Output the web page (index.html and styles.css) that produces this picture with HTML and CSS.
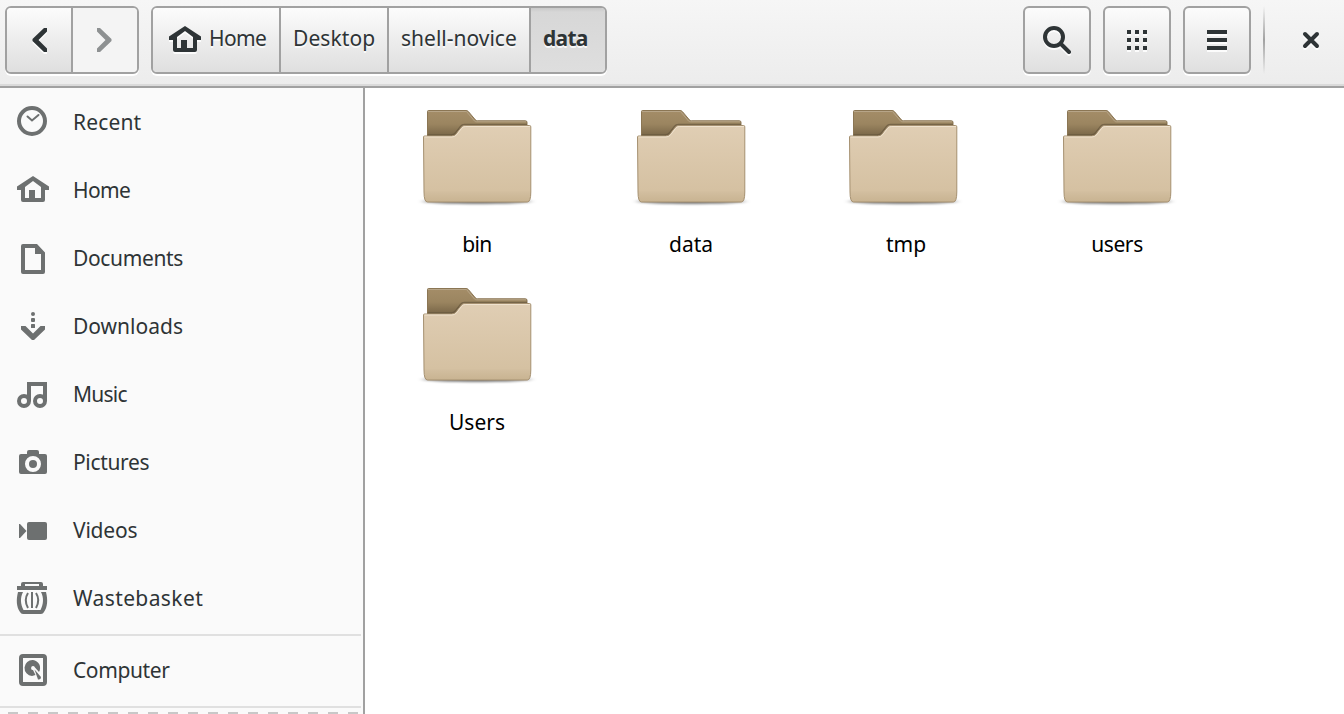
FILE: index.html
```
<!DOCTYPE html>
<html lang="en">
<head>
<meta charset="utf-8">
<title>data</title>
<link rel="stylesheet" href="styles.css">
</head>
<body>
<svg class="defs" width="0" height="0" aria-hidden="true">
  <defs>
    <linearGradient id="front" x1="0" y1="0" x2="0" y2="1">
      <stop offset="0" stop-color="#e0ceb4"/><stop offset=".85" stop-color="#d5c1a2"/><stop offset=".88" stop-color="#d1bd9e"/><stop offset="1" stop-color="#c8b391"/>
    </linearGradient>
    <linearGradient id="back" x1="0" y1="0" x2="0" y2="1">
      <stop offset="0" stop-color="#a48d68"/><stop offset=".16" stop-color="#9b8560"/><stop offset=".28" stop-color="#7d6a4b"/>
    </linearGradient>
    <radialGradient id="shade"><stop offset="0" stop-color="#000" stop-opacity=".6"/><stop offset=".8" stop-color="#000" stop-opacity=".4"/><stop offset="1" stop-color="#000" stop-opacity="0"/></radialGradient>
    <filter id="soft" x="-10%" y="-80%" width="120%" height="260%"><feGaussianBlur stdDeviation="1.500 .8"/></filter>
    <symbol id="folder" viewBox="0 0 140 120">
      <ellipse cx="67" cy="106.500" rx="59" ry="3.200" fill="url(#shade)" filter="url(#soft)"/>
      <path d="M17.500 16.500q0-1 1-1h37.500q1.500 0 2.500 1.200l7 8.300q.8.800 2 .8h48q1.500 0 1.500 1.500V100H17.500z" fill="url(#back)" stroke="#8b7654"/>
      <path d="M18 16.500h38.500l8 9.500q.8.800 2 .8H116" fill="none" stroke="#b7a588" stroke-width="1"/>
      <path d="M17.500 40h23.500q3 0 4.500-2l5-6.500q1.500-2 4-2H117" fill="none" stroke="#5f5038" stroke-opacity=".6" stroke-width="1.500"/>
      <path d="M13.500 42q0-1 1-1h27q3 0 4.500-2l5-6.500q1.500-2 4-2h64.500q1.300 0 1.300 1.300V97q0 10-3.500 10H17.500q-3.500 0-3.500-10z" fill="url(#front)" stroke="#a59070"/>
      <path d="M14.500 42h27.500q3 0 4.800-2.400l4.600-6q1.500-2.100 4-2.100H120" fill="none" stroke="#efe2ce"/>
    </symbol>
  </defs>
</svg>
<header class="bar">
  <div class="group">
    <button class="btn nav" aria-label="Back"><svg width="64" height="64" viewBox="7 8 64 64"><path d="M47 28v3.500L38.500 40l8.500 8.500V52h-3L32.500 41v-2L44 28z"/></svg></button>
    <button class="btn nav off" aria-label="Forward"><svg width="64" height="64" viewBox="73 8 64 64"><path d="M97 28v3.500l8.500 8.500-8.500 8.500V52h3l11.500-11v-2L100 28z"/></svg></button>
  </div>
  <nav class="group path">
    <button class="btn p1"><svg width="34" height="36" viewBox="168 22 34 36"><path fill-rule="evenodd" d="M185 26l16 10.500V40h-4v10q0 2-2 2h-20q-2 0-2-2V40h-4v-3.500zM185 31l-8 6v11h4v-8h6v8h6V37z"/></svg><span class="t-home">Home</span></button>
    <button class="btn p2"><span class="t-desk">Desktop</span></button>
    <button class="btn p3"><span class="t-shell">shell-novice</span></button>
    <button class="btn p4 on"><span class="t-data">data</span></button>
  </nav>
  <div class="tools">
    <button class="btn solo" aria-label="Search"><svg width="64" height="64" viewBox="1025 8 64 64"><circle cx="1054" cy="37" r="9" fill="none" stroke="#2e3436" stroke-width="4"/><path d="M1061 44l8 8" fill="none" stroke="#2e3436" stroke-width="4" stroke-linecap="round"/></svg></button>
    <button class="btn solo" aria-label="Grid view"><svg width="64" height="64" viewBox="1105 8 64 64"><path d="M1127 30h4v4h-4zm8 0h4v4h-4zm8 0h4v4h-4zm-16 8h4v4h-4zm8 0h4v4h-4zm8 0h4v4h-4zm-16 8h4v4h-4zm8 0h4v4h-4zm8 0h4v4h-4z"/></svg></button>
    <button class="btn solo" aria-label="Menu"><svg width="64" height="64" viewBox="1185 8 64 64"><path d="M1207 30h20v4h-20zm0 8h20v4h-20zm0 8h20v4h-20z"/></svg></button>
    <span class="sep"></span>
    <button class="close" aria-label="Close"><svg width="20" height="24" viewBox="1301 28 20 24"><path d="M1305 34l12 12m0-12l-12 12" fill="none" stroke="#2e3436" stroke-width="4" stroke-linecap="round"/></svg></button>
  </div>
</header>
<div class="main">
  <aside class="side">
    <div class="row"><svg class="ico" viewBox="16 104 34 36"><circle cx="32" cy="121" r="13" fill="none" stroke="#6d7070" stroke-width="4"/><path d="M27.500 116.500l4.500 4 6.500-5.500" fill="none" stroke="#6d7070" stroke-width="2" stroke-linecap="round"/></svg><span class="s-rec">Recent</span></div>
    <div class="row"><svg class="ico" viewBox="16 172 34 36"><path fill-rule="evenodd" d="M33 176l16 10.500V190h-4v10q0 2-2 2H23q-2 0-2-2v-10h-4v-3.500zM33 181l-8 6v11h4v-8h6v8h6v-11z"/></svg><span class="s-home">Home</span></div>
    <div class="row"><svg class="ico" viewBox="16 240 34 36"><path fill-rule="evenodd" d="M23 244h14l8 8.500V272q0 2-2 2H23q-2 0-2-2v-26q0-2 2-2zM25 248v22h16v-16h-6v-6z"/></svg><span class="s-doc">Documents</span></div>
    <div class="row"><svg class="ico" viewBox="16 308 34 36"><circle cx="33" cy="314" r="2"/><rect x="31" y="318" width="4" height="4" rx="1"/><rect x="31" y="324" width="4" height="4" rx=".5"/><path d="M21 326h4.500l7.500 7.500 7.500-7.500H45v3.500L34 340h-2l-11-10.500z"/></svg><span class="s-down">Downloads</span></div>
    <div class="row"><svg class="ico" viewBox="16 376 34 36"><g fill="none" stroke="#6d7070" stroke-width="4"><circle cx="24" cy="401" r="5"/><circle cx="40" cy="401" r="5"/><path d="M29 401v-17h16v17"/></g></svg><span class="s-mus">Music</span></div>
    <div class="row"><svg class="ico" viewBox="16 444 34 36"><path fill-rule="evenodd" d="M27 454v-2q0-2 2-2h8q2 0 2 2v2h6q2 0 2 2v16q0 2-2 2H21q-2 0-2-2v-16q0-2 2-2zM33 456a8 8 0 100 16 8 8 0 000-16z"/><circle cx="33" cy="464" r="4"/></svg><span class="s-pic">Pictures</span></div>
    <div class="row"><svg class="ico" viewBox="16 512 34 36"><path d="M19 524h1l6.500 7-6.500 7h-1z"/><rect x="27" y="522" width="20" height="18" rx="2"/></svg><span class="s-vid">Videos</span></div>
    <div class="row"><svg class="ico" viewBox="16 580 34 36"><path fill-rule="evenodd" d="M17 586h4v-2q0-2 2-2h18q2 0 2 2v2h4v4H17zm8-2v2h14v-2z"/><path d="M18 592h5c-3 6-2.500 12 .5 18h17c3-6 3.500-12 .5-18h5c2 8 1.500 15-2 20q-1 2-3 2H23q-2 0-3-2c-3.500-5-4-12-2-20z"/><path d="M32 592v16M28 593q-4.500 7 0 15M36 593q4.500 7 0 15" fill="none" stroke="#6d7070" stroke-width="2"/></svg><span class="s-was">Wastebasket</span></div>
    <div class="row device"><svg class="ico" viewBox="16 652 34 36"><rect x="21" y="656" width="24" height="28" rx="2" fill="none" stroke="#6d7070" stroke-width="4"/><path fill-rule="evenodd" d="M33 660a8 8 0 00-1 16l3.500-1-2.500-5a2 2 0 112-2.500l4 4.500a8 8 0 00-6-12z"/><path d="M34.500 669.500l6.500 7.500q0 3-3 2.500z"/></svg><span class="s-com">Computer</span></div>
    <div class="dashes"></div>
  </aside>
  <main class="files">
    <div class="file"><svg width="140" height="120"><use href="#folder"/></svg><span class="f-bin">bin</span></div>
    <div class="file"><svg width="140" height="120"><use href="#folder"/></svg><span class="f-data">data</span></div>
    <div class="file"><svg width="140" height="120"><use href="#folder"/></svg><span class="f-tmp">tmp</span></div>
    <div class="file"><svg width="140" height="120"><use href="#folder"/></svg><span class="f-us">users</span></div>
    <div class="file"><svg width="140" height="120"><use href="#folder"/></svg><span class="f-Us">Users</span></div>
  </main>
</div>
</body>
</html>
```
FILE: styles.css
```
* { box-sizing: border-box; }
body { margin: 0; width: 1344px; height: 714px; overflow: hidden; display: flex; flex-direction: column; background: #fff; color: #2e3436; font: 21px/30px "Noto Sans", "Open Sans", sans-serif; }
svg { display: block; flex: none; }
.defs { position: absolute; }
button { font: inherit; color: inherit; border: 0; padding: 0; margin: 0; background: none; }
.bar { height: 88px; flex: none; display: flex; align-items: flex-start; padding: 6px 0 0 5px; background: linear-gradient(#f6f6f6, #ececec); border-bottom: 2px solid #a1a1a1; box-shadow: inset 0 -2px #dadada; }
.group, .solo { border: 2px solid #a1a1a1; border-radius: 6px; height: 68px; box-shadow: 0 2px #fff; overflow: hidden; }
.group { display: flex; }
.path { margin-left: 12px; }
.btn { display: flex; align-items: center; background: linear-gradient(#fcfcfc, #ededed 50%, #dfdfdf); text-shadow: 0 2px rgba(255,255,255,.8); white-space: nowrap; }
.btn svg, .close svg { fill: #2e3436; filter: drop-shadow(0 2px 0 rgba(255,255,255,.85)); }
.group .btn { height: 64px; }
.group .btn + .btn { border-left: 2px solid #a1a1a1; }
.nav.off { background: #f4f4f4; }
.nav.off svg { fill: #8e9192; filter: none; }
.path span { padding-bottom: 4px; }
.p1 { width: 126px; padding-left: 15px; gap: 7px; }
.p2 { width: 108px; padding-left: 12px; }
.p3 { width: 142px; padding-left: 12px; }
.p4 { width: 76px; padding-left: 12px; font-weight: bold; }
.on { background: linear-gradient(#c9c9c9, #d7d7d7 4px, #dedede); }
.tools { display: flex; margin-left: auto; padding-right: 23px; }
.solo { width: 68px; margin-right: 12px; }
.sep { width: 2px; height: 68px; margin-right: 36px; background: linear-gradient(transparent, #a1a1a1 50%, transparent); }
.close { height: 68px; display: flex; align-items: center; }
.main { flex: 1; min-height: 0; display: flex; }
.side { width: 365px; flex: none; border-right: 2px solid #a1a1a1; background: #fafafa; padding-right: 2px; overflow: hidden; }
.row { height: 68px; display: flex; align-items: center; padding-left: 16px; gap: 23px; }
.ico { width: 34px; height: 36px; fill: #6d7070; }
.device { height: 74px; margin-top: 2px; padding-bottom: 2px; border-top: 2px solid #e0e0e0; border-bottom: 2px solid #e0e0e0; }
.dashes { height: 2px; margin: 4px 3px 0 8px; background: repeating-linear-gradient(90deg, #c8c8c8 0 10px, transparent 10px 20px); }
.files { display: grid; grid-template-columns: 214px 214px 210px 218px; grid-auto-rows: 178px; align-content: start; padding: 7px 0 0 8px; color: #000; }
.file { display: flex; flex-direction: column; align-items: center; gap: 14px; }
.file svg { width: 140px; height: 120px; }
.file span { padding-right: 6px; }
.file .f-tmp { padding-right: 0; }
.t-home, .s-home { letter-spacing: -.6px; }
.t-desk { letter-spacing: .1px; }
.t-data { letter-spacing: -.7px; }
.s-rec { letter-spacing: .15px; }
.s-doc, .s-pic { letter-spacing: -.35px; }
.s-mus { letter-spacing: -.75px; }
.s-vid { letter-spacing: -.2px; }
.s-was { letter-spacing: .4px; }
.s-com { letter-spacing: -.4px; }
.f-bin { letter-spacing: -.6px; }
.f-us { letter-spacing: -.4px; }
```
